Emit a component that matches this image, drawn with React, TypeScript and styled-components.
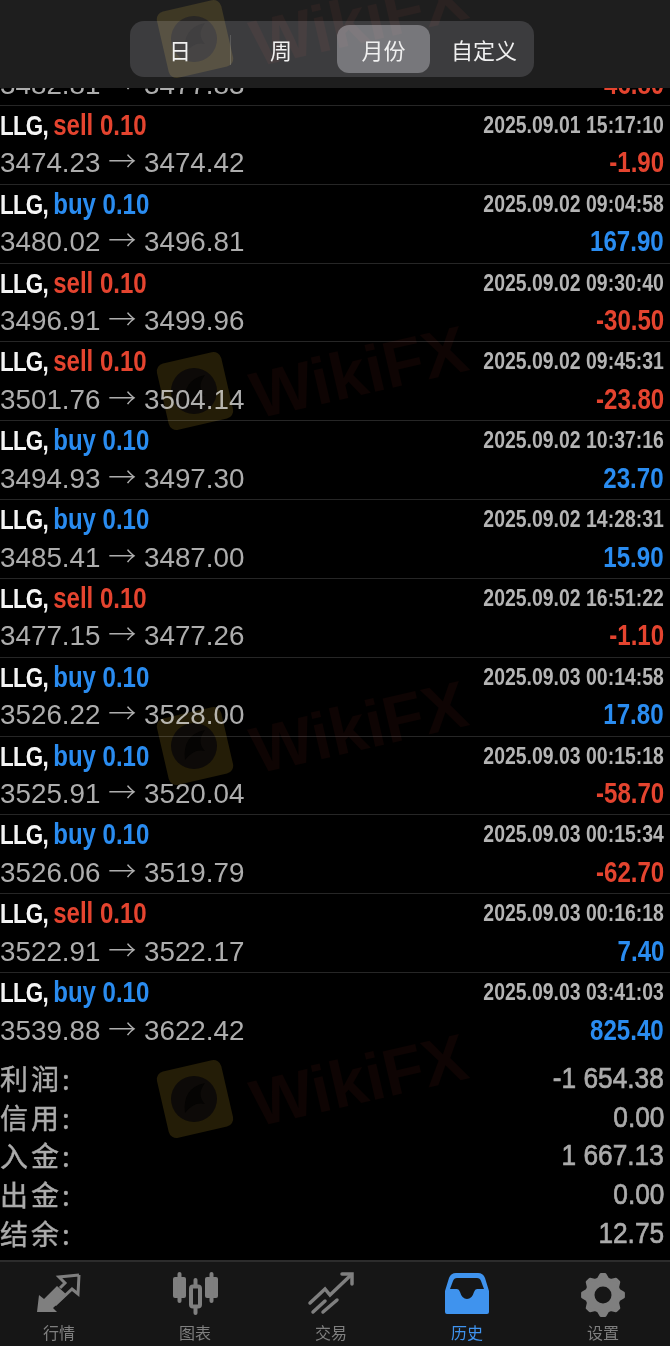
import React from 'react';
import styled, { createGlobalStyle } from 'styled-components';

const GlobalStyle = createGlobalStyle`
  html, body {
    margin: 0;
    padding: 0;
    background: #000;
  }
  * { box-sizing: border-box; }
`;

const SANS = `'Liberation Sans', 'Noto Sans CJK SC', sans-serif`;
const CJK = `'Noto Sans CJK SC', sans-serif`;

const RED = '#e4442f';
const BLUE = '#2a8cf0';

const Screen = styled.div`
  position: relative;
  width: 670px;
  height: 1346px;
  display: flex;
  flex-direction: column;
  background: #000;
  overflow: hidden;
`;

const Header = styled.header`
  height: 88px;
  flex: none;
  display: flex;
  justify-content: center;
  padding: 21px 6px 0 0;
  background: #1e1e1e;
`;

const Segmented = styled.div`
  width: 404px;
  height: 56px;
  padding: 4px;
  display: grid;
  grid-template-columns: 97px 106px 93px 100px;
  background: #3c3c3e;
  border-radius: 14px;
`;

const Segment = styled.div<{ $active?: boolean; $divider?: boolean; $left?: number; $right?: number }>`
  position: relative;
  display: flex;
  align-items: center;
  justify-content: center;
  padding: 0 ${(p) => p.$right ?? 0}px 0 ${(p) => p.$left ?? 0}px;
  font-family: ${CJK};
  font-size: 22px;
  color: #f0f0f0;
  border-radius: 12px;
  background: ${(p) => (p.$active ? '#77777b' : 'transparent')};

  &::after {
    content: '';
    display: ${(p) => (p.$divider ? 'block' : 'none')};
    position: absolute;
    right: 0;
    top: 10px;
    bottom: 8px;
    width: 1px;
    background: #5a5a5a;
  }
`;

const List = styled.div`
  flex: 1;
  min-height: 0;
  overflow: hidden;
`;

const Rows = styled.div`
  margin-top: -61px;
`;

const Row = styled.div`
  height: 78.85px;
  border-bottom: 1px solid #262626;
  display: grid;
  grid-template-columns: 1fr auto;
  grid-template-rows: 38px 38px;
  align-items: center;
`;

const Title = styled.div`
  font-family: ${SANS};
  font-weight: 700;
  font-size: 28px;
  letter-spacing: -1px;
  color: #f4f4f4;
  white-space: pre;
  transform: scaleX(0.8);
  transform-origin: left center;
`;

const Side = styled.span<{ $buy: boolean }>`
  color: ${(p) => (p.$buy ? BLUE : RED)};
  font-size: 30px;
  letter-spacing: 0;
`;

const Time = styled.div`
  justify-self: end;
  margin-right: 6px;
  font-family: ${SANS};
  font-weight: 700;
  font-size: 24px;
  color: #b4b4b4;
  transform: scaleX(0.81);
  transform-origin: right center;
`;

const Prices = styled.div`
  font-family: ${SANS};
  font-size: 27.8px;
  color: #adadad;
  white-space: pre;
`;

const Arrow = styled.span`
  font-family: ${CJK};
  font-weight: 300;
  font-size: 28px;
  line-height: 1;
`;

const Amount = styled.div<{ $loss: boolean }>`
  justify-self: end;
  margin-right: 6px;
  font-family: ${SANS};
  font-weight: 700;
  font-size: 29px;
  color: ${(p) => (p.$loss ? RED : BLUE)};
  transform: scaleX(0.83);
  transform-origin: right center;
`;

const Summary = styled.div`
  height: 209px;
  flex: none;
  padding-top: 8px;
`;

const SummaryRow = styled.div`
  height: 38.6px;
  display: flex;
  justify-content: space-between;
  align-items: center;
  font-family: ${SANS};
  color: #ababab;
`;

const Label = styled.span`
  font-family: ${CJK};
  font-size: 28px;
  letter-spacing: 3px;
  -webkit-text-stroke: 0.4px #ababab;
`;

const Value = styled.span`
  margin-right: 6px;
  font-size: 30px;
  -webkit-text-stroke: 0.7px #ababab;
  transform: scaleX(0.875);
  transform-origin: right center;
`;

const TabBar = styled.nav`
  height: 86px;
  flex: none;
  margin-left: -9px;
  width: 680px;
  display: grid;
  grid-template-columns: repeat(5, 136px);
  background: #161616;
  border-top: 2px solid #2c2c2c;
`;

const Tab = styled.div<{ $active?: boolean }>`
  display: flex;
  flex-direction: column;
  align-items: center;
  padding-top: 9px;
  font-family: ${CJK};
  font-size: 16px;
  line-height: 22px;
  color: ${(p) => (p.$active ? '#3f93ee' : '#7f7f7f')};

  svg {
    display: block;
    width: 48px;
    height: 48px;
    margin-bottom: 2px;
  }
`;

const Mark = styled.div<{ $top: number }>`
  position: absolute;
  left: 155px;
  top: ${(p) => p.$top}px;
  display: flex;
  align-items: flex-start;
  pointer-events: none;
  mix-blend-mode: screen;
`;

const Badge = styled.svg`
  width: 80px;
  height: 82px;
`;

const MarkText = styled.div`
  margin: -16px 0 0 14px;
  font-family: ${SANS};
  font-weight: 700;
  font-size: 66px;
  color: #0e0403;
  transform: rotate(-13deg);
`;

type Trade = {
  side: 'buy' | 'sell';
  time: string;
  from: string;
  to: string;
  profit: string;
};

const trades: Trade[] = [
  { side: 'sell', time: '2025.09.01 14:58:02', from: '3482.81', to: '3477.83', profit: '-46.80' },
  { side: 'sell', time: '2025.09.01 15:17:10', from: '3474.23', to: '3474.42', profit: '-1.90' },
  { side: 'buy', time: '2025.09.02 09:04:58', from: '3480.02', to: '3496.81', profit: '167.90' },
  { side: 'sell', time: '2025.09.02 09:30:40', from: '3496.91', to: '3499.96', profit: '-30.50' },
  { side: 'sell', time: '2025.09.02 09:45:31', from: '3501.76', to: '3504.14', profit: '-23.80' },
  { side: 'buy', time: '2025.09.02 10:37:16', from: '3494.93', to: '3497.30', profit: '23.70' },
  { side: 'buy', time: '2025.09.02 14:28:31', from: '3485.41', to: '3487.00', profit: '15.90' },
  { side: 'sell', time: '2025.09.02 16:51:22', from: '3477.15', to: '3477.26', profit: '-1.10' },
  { side: 'buy', time: '2025.09.03 00:14:58', from: '3526.22', to: '3528.00', profit: '17.80' },
  { side: 'buy', time: '2025.09.03 00:15:18', from: '3525.91', to: '3520.04', profit: '-58.70' },
  { side: 'buy', time: '2025.09.03 00:15:34', from: '3526.06', to: '3519.79', profit: '-62.70' },
  { side: 'sell', time: '2025.09.03 00:16:18', from: '3522.91', to: '3522.17', profit: '7.40' },
  { side: 'buy', time: '2025.09.03 03:41:03', from: '3539.88', to: '3622.42', profit: '825.40' },
];

const summary = [
  ['利润:', '-1 654.38'],
  ['信用:', '0.00'],
  ['入金:', '1 667.13'],
  ['出金:', '0.00'],
  ['结余:', '12.75'],
];

const QuotesIcon = () => (
  <svg viewBox="0 0 48 48" fill="currentColor">
    <path d="M2 41 L4 24 L9 28 L22 15 L32 24 L18 37 L22 41 Z" />
    <path
      d="M44 4 L24 6 L30 12 L25 17 M44 4 L43 23 L37 18 L20 34"
      fill="none"
      stroke="currentColor"
      strokeWidth="3"
    />
  </svg>
);

const ChartIcon = () => (
  <svg viewBox="0 0 48 48" fill="currentColor">
    <rect x="2" y="6" width="13" height="21" rx="2" />
    <rect x="6.500" y="1" width="4" height="31" rx="2" />
    <rect x="34" y="6" width="13" height="21" rx="2" />
    <rect x="38.500" y="1" width="4" height="31" rx="2" />
    <rect x="22.500" y="7" width="4" height="37" rx="2" />
    <rect x="20" y="15.500" width="9" height="20" rx="2" fill="#161616" stroke="currentColor" strokeWidth="4" />
  </svg>
);

const TradeIcon = () => (
  <svg viewBox="0 0 48 48" fill="none" stroke="currentColor" strokeWidth="3.500" strokeLinecap="round">
    <path d="M3 32 L18 18 L23 24 L44 4" />
    <path d="M35 3 H45 V13" strokeLinejoin="miter" />
    <path d="M6 41 L18 30" />
    <path d="M16 41 L30 29" />
  </svg>
);

const HistoryIcon = () => (
  <svg viewBox="0 0 48 48">
    <path
      fill="currentColor"
      fillRule="evenodd"
      d="M13 2 H35 Q40 2 42 7 L46 20 V41 Q46 43 44 43 H4 Q2 43 2 41 V20 L6 7 Q8 2 13 2Z M14 7 Q11 7 10 10 L7 18 H14 Q16 18 17 21 Q19 28 24 28 Q29 28 31 21 Q32 18 34 18 H41 L38 10 Q37 7 34 7 Z"
    />
  </svg>
);

// eight rounded lobes around the hub
const gearPoints = Array.from({ length: 32 }, (_, i) => {
  const angle = ((i * 11.25 - 5.625) * Math.PI) / 180;
  const radius = i % 4 === 0 || i % 4 === 1 ? 20.5 : 16.5;
  return `${(24 + radius * Math.sin(angle)).toFixed(1)},${(24 - radius * Math.cos(angle)).toFixed(1)}`;
}).join(' ');

const SettingsIcon = () => (
  <svg viewBox="0 0 48 48">
    <polygon points={gearPoints} fill="currentColor" stroke="currentColor" strokeWidth="3" strokeLinejoin="round" />
    <circle cx="24" cy="24" r="8.500" fill="#161616" />
  </svg>
);

const tabs = [
  { label: '行情', icon: <QuotesIcon /> },
  { label: '图表', icon: <ChartIcon /> },
  { label: '交易', icon: <TradeIcon /> },
  { label: '历史', icon: <HistoryIcon />, active: true },
  { label: '设置', icon: <SettingsIcon /> },
];

const Watermark = ({ top }: { top: number }) => (
  <Mark $top={top}>
    <Badge viewBox="0 0 80 82">
      <rect x="7" y="7" width="66" height="68" rx="8" fill="#241d07" transform="rotate(-13 40 41)" />
      <circle cx="39" cy="41" r="23" fill="#0d0a08" />
      <path d="M30 55 Q27 30 50 25 Q41 37 50 46 Q39 43 30 55Z" fill="#050403" />
    </Badge>
    <MarkText>WikiFX</MarkText>
  </Mark>
);

export default function App() {
  return (
    <>
      <GlobalStyle />
      <Screen>
        <Header>
          <Segmented>
            <Segment $divider $right={5}>日</Segment>
            <Segment $right={6}>周</Segment>
            <Segment $active>月份</Segment>
            <Segment $left={8}>自定义</Segment>
          </Segmented>
        </Header>
        <List>
          <Rows>
            {trades.map((t) => (
              <Row key={t.time}>
                <Title>
                  LLG, <Side $buy={t.side === 'buy'}>{t.side} 0.10</Side>
                </Title>
                <Time>{t.time}</Time>
                <Prices>
                  {t.from} <Arrow>→</Arrow> {t.to}
                </Prices>
                <Amount $loss={t.profit.startsWith('-')}>{t.profit}</Amount>
              </Row>
            ))}
          </Rows>
        </List>
        <Summary>
          {summary.map(([label, value]) => (
            <SummaryRow key={label}>
              <Label>{label}</Label>
              <Value>{value}</Value>
            </SummaryRow>
          ))}
        </Summary>
        <TabBar>
          {tabs.map((tab) => (
            <Tab key={tab.label} $active={tab.active}>
              {tab.icon}
              {tab.label}
            </Tab>
          ))}
        </TabBar>
        {[-2, 350, 705, 1058].map((top) => (
          <Watermark key={top} top={top} />
        ))}
      </Screen>
    </>
  );
}
